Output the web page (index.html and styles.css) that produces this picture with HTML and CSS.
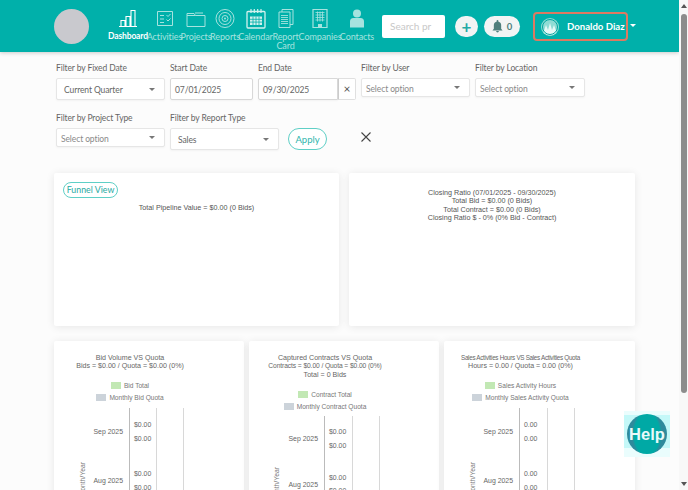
FILE: index.html
```html
<!DOCTYPE html>
<html lang="en">
<head>
<meta charset="utf-8">
<title>Dashboard</title>
<link rel="stylesheet" href="styles.css">
</head>
<body>
<div class="page">
  <header class="topbar">
    <div class="avatar"></div>
    <nav class="nav">
      <a class="nav-item active w40">
        <svg viewBox="0 0 20 20" width="20" height="20"><path d="M1 18h18M3 18v-6h4v6M8 18V8h4v10M13 18V2h4v16" fill="none" stroke="#fff" stroke-width="1.1"/></svg>
        <span>Dashboard</span></a>
      <a class="nav-item w33">
        <svg viewBox="0 0 18 18" width="18" height="18"><path d="M1.500 2h15v14h-15zM4 6h4M4 9.500h4M4 13h4M10.500 5.500l1.500 1.500 2.500-2.500M10.500 10l1.500 1.500 2.500-2.500" fill="none" stroke="#a6e3df" stroke-width="1"/></svg>
        <span>Activities</span></a>
      <a class="nav-item w30">
        <svg viewBox="0 0 20 18" width="20" height="18"><path d="M1 4h7l1.500 2H19v11H1zM1 6h8.500M17 3.500H9" fill="none" stroke="#a6e3df" stroke-width="1"/></svg>
        <span>Projects</span></a>
      <a class="nav-item w28">
        <svg viewBox="0 0 20 20" width="20" height="20"><g fill="none" stroke="#a6e3df"><circle cx="10" cy="10" r="9"/><circle cx="10" cy="10" r="6"/><circle cx="10" cy="10" r="3"/></g><circle cx="10" cy="10" r="1" fill="#a6e3df"/></svg>
        <span>Reports</span></a>
      <a class="nav-item w33">
        <svg viewBox="0 0 20 21" width="20" height="21"><path d="M2 3.500h16a1 1 0 0 1 1 1V19a1 1 0 0 1-1 1H2a1 1 0 0 1-1-1V4.500a1 1 0 0 1 1-1z" fill="none" stroke="#d2f1ee" stroke-width="1.300"/><path d="M5 1v4M8.300 1v4M11.700 1v4M15 1v4" stroke="#d2f1ee" stroke-width="1.200"/><path d="M4 8.500h12v8.500H4z" fill="#d2f1ee"/><path d="M4 11.300h12M4 14.100h12M7 8.500V17M10 8.500V17M13 8.500V17" stroke="#00b0aa" stroke-width=".8"/></svg>
        <span>Calendar</span></a>
      <a class="nav-item w27">
        <svg viewBox="0 0 16 20" width="16" height="20"><path d="M4 1h11v15H4z" fill="none" stroke="#a6e3df"/><path d="M1 3.500h11V19H1z" fill="#00b0aa" stroke="#a6e3df"/><path d="M3 7h7M3 9h7M3 11h7M3 13h7M3 15h7" stroke="#a6e3df" stroke-width=".9"/></svg>
        <span>Report Card</span></a>
      <a class="nav-item w42">
        <svg viewBox="0 0 16 20" width="16" height="20"><path d="M1 1h14v18H1z" fill="none" stroke="#a6e3df" stroke-width="1.200"/><path d="M3.500 4h9M3.500 6.500h9M3.500 9h9M3.500 11.500h9M5.500 3v10M8 3v10M10.500 3v10" stroke="#a6e3df" stroke-width=".8"/><path d="M6 19v-3.500h4V19" fill="#a6e3df"/></svg>
        <span>Companies</span></a>
      <a class="nav-item w32">
        <svg viewBox="0 0 16 20" width="16" height="20"><circle cx="8" cy="5" r="4" fill="#a6e3df"/><path d="M1 19v-6a3.500 3.500 0 0 1 3.500-3.500h7A3.500 3.500 0 0 1 15 13v6z" fill="#a6e3df"/></svg>
        <span>Contacts</span></a>
    </nav>
    <div class="search">Search pr</div>
    <div class="pill plus">+</div>
    <div class="pill bell">
      <svg viewBox="0 0 12 14" width="11" height="13"><path d="M6 0a1 1 0 0 1 1 1v.800A4 4 0 0 1 10 6v3.500l1.500 1.800H.5L2 9.500V6a4 4 0 0 1 3-4.200V1a1 1 0 0 1 1-1zM4.500 12h3a1.500 1.500 0 0 1-3 0z" fill="#4f7f7c"/></svg>
      <span>0</span>
    </div>
    <div class="user">
      <svg class="user-pic" viewBox="0 0 18 18" width="18" height="18"><circle cx="9" cy="9" r="9" fill="#8fdcd4"/><path d="M2.500 14L5 7l2 5 2-7 2 7 2-5 2.500 7a8 8 0 0 1-13 0z" fill="#e6f8f6"/><circle cx="9" cy="9" r="7.500" fill="none" stroke="#00a59f" stroke-width="1"/></svg>
      <span>Donaldo Diaz</span>
    </div>
    <i class="caret white"></i>
  </header>

  <main class="content">
    <section class="filters">
      <div class="field f109"><label>Filter by Fixed Date</label><div class="control tall"><b class="val">Current Quarter</b><i class="caret"></i></div></div>
      <div class="field f83"><label>Start Date</label><div class="control tall date"><b class="val">07/01/2025</b></div></div>
      <div class="field f98"><label>End Date</label>
        <div class="date-group"><div class="control tall date grow"><b class="val">09/30/2025</b></div><div class="clear">×</div></div>
      </div>
      <div class="field f109"><label>Filter by User</label><div class="control"><b class="val ph">Select option</b><i class="caret"></i></div></div>
      <div class="field f110"><label>Filter by Location</label><div class="control"><b class="val ph">Select option</b><i class="caret"></i></div></div>
      <div class="break"></div>
      <div class="field f109"><label>Filter by Project Type</label><div class="control"><b class="val ph">Select option</b><i class="caret"></i></div></div>
      <div class="field f109"><label>Filter by Report Type</label><div class="control tall"><b class="val">Sales</b><i class="caret"></i></div></div>
      <button class="apply">Apply</button>
      <svg class="close" viewBox="0 0 10 10" width="10" height="10"><path d="M.5.500l9 9M9.500.500l-9 9" stroke="#444" stroke-width="1.100"/></svg>
    </section>

    <section class="row-two">
      <article class="card big">
        <span class="funnel">Funnel View</span>
        <p class="pipeline">Total Pipeline Value = $0.00 (0 Bids)</p>
      </article>
      <article class="card big closing">
        <p>Closing Ratio (07/01/2025 - 09/30/2025)</p>
        <p>Total Bid = $0.00 (0 Bids)</p>
        <p>Total Contract = $0.00 (0 Bids)</p>
        <p>Closing Ratio $ - 0% (0% Bid - Contract)</p>
      </article>
    </section>

    <section class="row-three">
      <article class="card chart">
        <div class="chart-title">
          <p>Bid Volume VS Quota</p>
          <p>Bids = $0.00 / Quota = $0.00 (0%)</p>
        </div>
        <div class="legend"><span class="swatch green"></span>Bid Total</div>
        <div class="legend"><span class="swatch grey"></span>Monthly Bid Quota</div>
        <svg class="plot" viewBox="0 0 190 82" width="190" height="82">
          <g stroke="#d8d8d8"><path d="M75.500 0v82" stroke="#bbb"/><path d="M102.500 0v82M129.500 0v82"/></g>
          <g class="tick"><text x="69" y="25.500" text-anchor="end">Sep 2025</text><text x="69" y="74.500" text-anchor="end">Aug 2025</text>
          <text x="80" y="18.500">$0.00</text><text x="80" y="32.500">$0.00</text><text x="80" y="67.500">$0.00</text><text x="80" y="81.500">$0.00</text></g>
          <text class="axis" text-anchor="end" transform="translate(31 54) rotate(-90)">Month/Year</text>
        </svg>
      </article>
      <article class="card chart">
        <div class="chart-title three">
          <p>Captured Contracts VS Quota</p>
          <p class="tight">Contracts = $0.00 / Quota = $0.00 (0%)</p>
          <p>Total = 0 Bids</p>
        </div>
        <div class="legend"><span class="swatch green"></span>Contract Total</div>
        <div class="legend"><span class="swatch grey"></span>Monthly Contract Quota</div>
        <svg class="plot low" viewBox="0 0 190 74" width="190" height="74">
          <g stroke="#d8d8d8"><path d="M75.500 0v74" stroke="#bbb"/><path d="M103.500 0v74M130.500 0v74"/></g>
          <g class="tick"><text x="69" y="24.500" text-anchor="end">Sep 2025</text><text x="69" y="70.500" text-anchor="end">Aug 2025</text>
          <text x="80" y="17.500">$0.00</text><text x="80" y="31.500">$0.00</text><text x="80" y="63.500">$0.00</text><text x="80" y="76.500">$0.00</text></g>
          <text class="axis" text-anchor="end" transform="translate(30 51) rotate(-90)">Month/Year</text>
        </svg>
      </article>
      <article class="card chart">
        <div class="chart-title">
          <p class="narrow">Sales Activities Hours VS Sales Activities Quota</p>
          <p>Hours = 0.00 / Quota = 0.00 (0%)</p>
        </div>
        <div class="legend"><span class="swatch green"></span>Sales Activity Hours</div>
        <div class="legend"><span class="swatch grey"></span>Monthly Sales Activity Quota</div>
        <svg class="plot" viewBox="0 0 190 82" width="190" height="82">
          <g stroke="#d8d8d8"><path d="M75.500 0v82" stroke="#bbb"/><path d="M103.500 0v82M130.500 0v82"/></g>
          <g class="tick"><text x="69" y="25.500" text-anchor="end">Sep 2025</text><text x="69" y="74.500" text-anchor="end">Aug 2025</text>
          <text x="80" y="18.500">0.00</text><text x="80" y="32.500">0.00</text><text x="80" y="67.500">0.00</text><text x="80" y="81.500">0.00</text></g>
          <text class="axis" text-anchor="end" transform="translate(31 54) rotate(-90)">Month/Year</text>
        </svg>
      </article>
    </section>
  </main>
</div>

<div class="scrollbar"><i class="arrow up"></i><div class="thumb"></div><i class="arrow down"></i></div>
<div class="help"><span>Help</span></div>
</body>
</html>
```

FILE: styles.css
```css
* { box-sizing: border-box; }
html, body { margin: 0; height: 100%; overflow: hidden; }
body { background: #fcfcfc; font-family: Lato, "Open Sans", sans-serif; color: #555; display: flex; }
p { margin: 0; }

.page { width: 679px; height: 490px; flex: none; overflow: hidden; }

.topbar { height: 52px; background: #00b0aa; box-shadow: 0 1px 4px rgba(0,0,0,.2); display: flex; align-items: flex-start; padding: 9px 0 0 54px; position: relative; }
.avatar { width: 35px; height: 35px; border-radius: 50%; background: #c9c9ce; flex: none; margin-right: 19px; }
.nav { display: flex; flex: none; width: 265px; }
.nav-item { display: flex; flex-direction: column; align-items: center; height: 40px; color: #a6e3df; font-size: 9px; line-height: 9.500px; text-align: center; flex: none; letter-spacing: -.1px; }
.nav-item svg { height: 21px; margin: -1px 0 2.500px; flex: none; }
.nav-item span { display: block; }
.nav-item.active { color: #fff; font-weight: 700; font-size: 8.500px; letter-spacing: -.15px; }
.w40 { width: 40px; } .w33 { width: 33px; } .w30 { width: 30px; } .w28 { width: 28px; } .w27 { width: 27px; } .w42 { width: 42px; } .w32 { width: 32px; }

.search { width: 63px; height: 23px; margin: 6px 0 0 9px; background: #fff; border-radius: 2px; color: #c8c8c8; font-size: 10px; line-height: 23px; padding-left: 8px; overflow: hidden; white-space: nowrap; flex: none; }
.pill { background: #f2f4f4; border-radius: 11px; height: 21px; margin-top: 7px; display: flex; align-items: center; justify-content: center; flex: none; }
.plus { width: 23px; margin-left: 10px; color: #24aaa6; font-size: 17px; font-weight: 700; line-height: 1; }
.bell { width: 36px; margin-left: 6px; gap: 4px; font-size: 9.500px; font-weight: 700; color: #4f7f7c; }
.user { width: 95px; height: 29px; margin: 3px 0 0 13px; border: 2px solid #dd7a62; border-radius: 4px; display: flex; align-items: center; padding-left: 6px; gap: 8px; color: #fff; font-size: 9.600px; font-weight: 700; white-space: nowrap; flex: none; }
.user-pic { flex: none; }
.caret { width: 0; height: 0; border: 3px solid transparent; border-top: 3.500px solid #777; border-bottom: 0; flex: none; }
.caret.white { border-top-color: #fff; margin: 15px 0 0 2px; }

.content { padding: 0 0 0 54px; }
.filters { display: flex; flex-wrap: wrap; gap: 0 5px; padding: 9px 0 0 2px; height: 121px; align-content: flex-start; align-items: flex-start; }
.break { flex-basis: 100%; height: 11px; }
.field { display: flex; flex-direction: column; flex: none; }
.field label { font-size: 8.500px; letter-spacing: -.1px; line-height: 14px; height: 17px; color: #666; }
.f109 { width: 109px; } .f110 { width: 110px; } .f83 { width: 83px; } .f98 { width: 98px; }
.control { height: 19px; background: #fff; border: 1px solid #e6e6e6; border-radius: 2px; display: flex; align-items: center; justify-content: space-between; padding: 0 9px 0 4px; box-shadow: 0 1px 2px rgba(0,0,0,.04); }
.control .val { padding-top: 2px; }
.control.tall { height: 22px; padding-left: 7px; }
.control.tall .val { padding-top: 1px; }
.control.date { padding-left: 4px; border-color: #d8d8d8; }
.val { font-weight: 400; font-size: 8.500px; letter-spacing: -.1px; color: #666; white-space: nowrap; }
.val.ph { color: #8a8a8a; }
.date-group { display: flex; }
.grow { flex: 1; min-width: 0; border-radius: 2px 0 0 2px; }
.clear { width: 18px; height: 22px; background: #fff; border: 1px solid #e0e0e0; border-left: 1px solid #ccc; border-radius: 0 2px 2px 0; font-size: 12px; line-height: 19px; text-align: center; color: #555; flex: none; }
.apply { width: 39px; height: 22px; margin: 17px 0 0 4px; background: #fff; border: 1px solid #5fcfc6; border-radius: 11px; color: #2fb5ad; font: 9.500px Lato, sans-serif; padding: 0; }
.close { margin: 21px 0 0 29px; flex: none; }

.row-two { display: flex; gap: 10px; }
.card { background: #fff; border-radius: 2px; box-shadow: 0 1px 8px rgba(0,0,0,.09); flex: none; }
.big { width: 285px; height: 153px; font-family: "Liberation Sans", Arial, sans-serif; font-size: 7.200px; color: #555; }
.big.closing { width: 286px; padding-top: 15.500px; text-align: center; line-height: 8.600px; }
.funnel { display: block; width: 55px; height: 16px; margin: 9px 0 0 9px; border: 1px solid #5fcfc6; border-radius: 8px; color: #1fa9a2; font: 8.800px/14px Lato, sans-serif; text-align: center; white-space: nowrap; }
.pipeline { text-align: center; margin-top: 5px; line-height: 10px; }

.row-three { display: flex; gap: 5px; margin-top: 15px; }
.chart { width: 190px; height: 170px; font-family: "Liberation Sans", Arial, sans-serif; color: #666; overflow: hidden; }
.chart:last-child { width: 191px; }
.chart-title { text-align: center; font-size: 7.100px; line-height: 8.700px; padding: 12.500px 38px 0 0; height: 38px; white-space: nowrap; }
.chart-title.three { height: 47px; }
.tight { font-size: 6.700px; letter-spacing: -.1px; }
.narrow { font-size: 6.300px; letter-spacing: -.3px; }
.legend { height: 12.500px; display: flex; align-items: center; justify-content: center; gap: 3px; font-size: 6.600px; padding-right: 38px; color: #777; white-space: nowrap; }
.swatch { width: 10px; height: 7px; display: block; }
.swatch.green { background: #c2e8b4; }
.swatch.grey { background: #ccd3da; }
.plot { display: block; margin-top: 4px; }
.plot.low { margin-top: 3px; }
.tick text { font-size: 6.900px; fill: #666; }
.axis { font-size: 6.800px; fill: #777; }

.scrollbar { position: fixed; top: 0; right: 0; bottom: 0; width: 9px; background: #f8f8f8; display: flex; flex-direction: column; align-items: center; }
.thumb { width: 6px; height: 379px; margin-top: 6px; background: #8c8c8c; border-radius: 3px; }
.arrow { width: 0; height: 0; border: 3px solid transparent; display: block; }
.arrow.up { border-top: 0; border-bottom: 4px solid #555; margin-top: 4px; }
.arrow.down { border-bottom: 0; border-top: 4px solid #555; margin-top: auto; margin-bottom: 4px; }

.help { position: fixed; left: 624px; top: 411px; width: 46px; height: 46px; background: linear-gradient(#eafdfd 4px, #c4f8f8 4px, #c4f8f8 37px, #eafdfd 37px); display: flex; align-items: center; justify-content: center; }
.help span { width: 40px; height: 40px; border-radius: 50%; background: radial-gradient(ellipse 15px 24px, #00a9a5 85%, #2f8a9c 100%); color: #e8fafa; font: 700 16.500px/40px "Liberation Sans", Arial, sans-serif; text-align: center; display: block; flex: none; }
```
